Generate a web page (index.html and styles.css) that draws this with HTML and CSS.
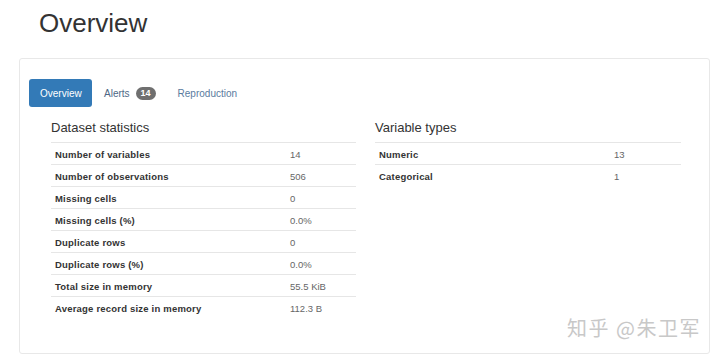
FILE: index.html
```html
<!DOCTYPE html>
<html>
<head>
<meta charset="utf-8">
<link rel="stylesheet" href="styles.css">
</head>
<body>
<h1 class="title">Overview</h1>
<div class="panel">
  <div class="tabs">
    <span class="tab active">Overview</span>
    <span class="tab alerts">Alerts <span class="badge">14</span></span>
    <span class="tab">Reproduction</span>
  </div>
  <div class="cols">
    <div class="col">
      <h2 class="heading">Dataset statistics</h2>
      <table class="stats">
        <tr><th>Number of variables</th><td>14</td></tr>
        <tr><th>Number of observations</th><td>506</td></tr>
        <tr><th>Missing cells</th><td>0</td></tr>
        <tr><th>Missing cells (%)</th><td>0.0%</td></tr>
        <tr><th>Duplicate rows</th><td>0</td></tr>
        <tr><th>Duplicate rows (%)</th><td>0.0%</td></tr>
        <tr><th>Total size in memory</th><td>55.5 KiB</td></tr>
        <tr><th>Average record size in memory</th><td>112.3 B</td></tr>
      </table>
    </div>
    <div class="col">
      <h2 class="heading">Variable types</h2>
      <table class="stats">
        <tr><th>Numeric</th><td>13</td></tr>
        <tr><th>Categorical</th><td>1</td></tr>
      </table>
    </div>
  </div>
  <div class="watermark">知乎 @朱卫军</div>
</div>
</body>
</html>
```
FILE: styles.css
```css
html, body { margin: 0; padding: 0; background: #fff; }
body {
  font-family: "Liberation Sans", Arial, sans-serif;
  color: #333;
  width: 720px;
  height: 362px;
  overflow: hidden;
}
.title {
  font-weight: 400;
  font-size: 26px;
  line-height: 30px;
  margin: 0;
  padding: 8px 0 0 39px;
  color: #333;
}
.panel {
  margin: 20px 10px 0 19px;
  height: 296px;
  border: 1px solid #e8e8e8;
  border-radius: 3px;
  padding: 20px 0 0 9px;
  position: relative;
  box-sizing: border-box;
}
.tabs {
  display: flex;
  align-items: center;
  height: 28px;
}
.tab {
  font-size: 10px;
  color: #5a7b9e;
  padding: 0 12px 0 0;
  margin-right: 10px;
  display: flex;
  align-items: center;
}
.tab.alerts { color: #4d6785; }
.tab.active {
  background: #337ab7;
  color: #fff;
  border-radius: 3px;
  height: 28px;
  width: 63px;
  box-sizing: border-box;
  padding: 0 0 0 11px;
  margin-right: 12px;
}
.badge {
  background: #6f6f6f;
  color: #fff;
  font-weight: bold;
  font-size: 9px;
  border-radius: 7px;
  padding: 1px 5px;
  margin-left: 6px;
  line-height: 11px;
}
.cols {
  display: grid;
  grid-template-columns: 305px 306px;
  column-gap: 19px;
  padding-left: 22px;
}
.heading {
  font-size: 13px;
  font-weight: 400;
  margin: 0;
  padding: 13px 0 0 0;
  height: 22px;
  line-height: 16px;
  color: #333;
}
.stats {
  border-collapse: collapse;
  width: 100%;
  font-size: 9.5px;
}
.stats tr { height: 22px; border-top: 1px solid #e6e6e6; }
.stats th {
  text-align: left;
  font-weight: bold;
  color: #333;
  padding: 1px 4px 0;
  width: 227px;
  letter-spacing: 0.2px;
}
.stats td { color: #666; padding: 1px 4px 0; }
.watermark {
  position: absolute;
  right: 8px;
  bottom: 11px;
  font-family: "Noto Sans CJK SC", sans-serif;
  font-size: 20px;
  color: #c8c8c8;
  letter-spacing: 1.5px;
}
```
